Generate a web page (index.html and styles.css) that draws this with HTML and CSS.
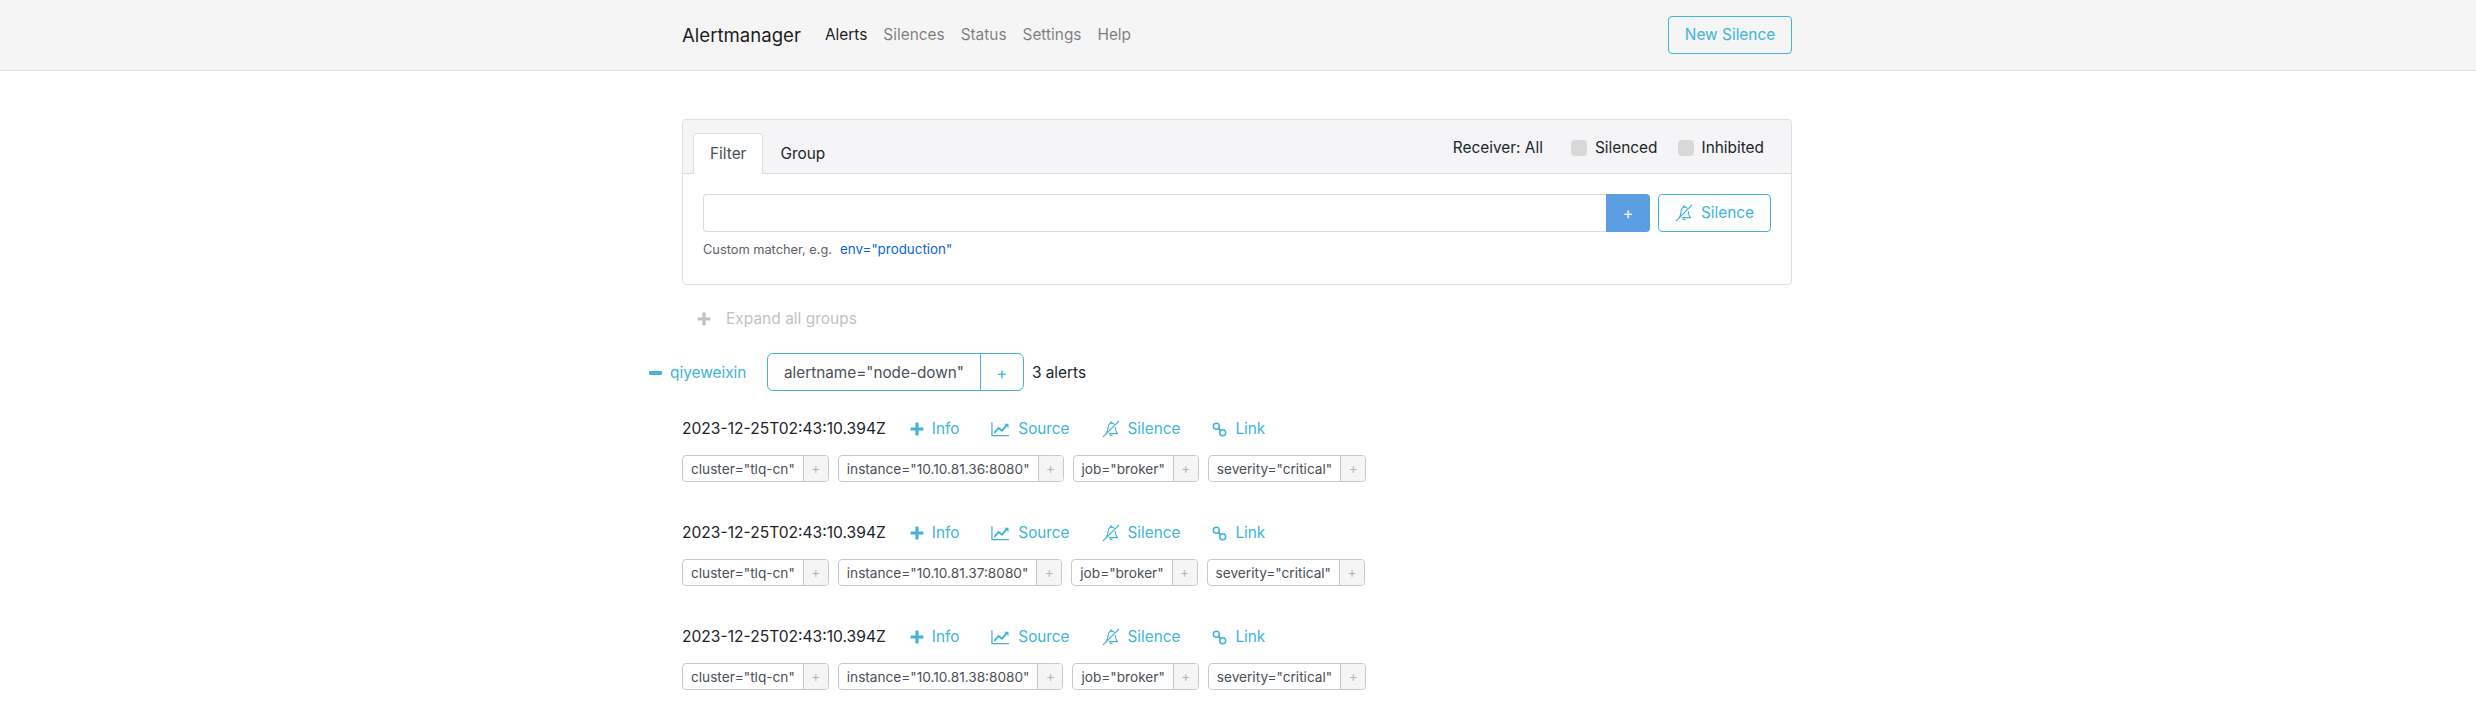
FILE: index.html
```html
<!DOCTYPE html>
<html lang="en">
<head>
<meta charset="utf-8">
<title>Alertmanager</title>
<link rel="stylesheet" href="styles.css">
</head>
<body>
<svg class="defs" width="0" height="0" aria-hidden="true">
  <symbol id="i-plus" viewBox="0 0 14 14"><path d="M5.4 0.6h3.2v4.8h4.8v3.2H8.6v4.8H5.4V8.6H0.6V5.4h4.8z" fill="currentColor"/></symbol>
  <symbol id="i-chart" viewBox="0 0 20 16"><path d="M1 1v14h18" fill="none" stroke="currentColor" stroke-width="1.3"/><path d="M3.5 12l4.5-5 3.5 2.8L17 3.5" fill="none" stroke="currentColor" stroke-width="2"/><path d="M14 2.5h4.4v4.4z" fill="currentColor"/></symbol>
  <symbol id="i-bell" viewBox="0 0 20 20"><path d="M1 19L19 1" fill="none" stroke="currentColor" stroke-width="1.4"/><path d="M4.5 15.5c1.6-1.8 2-3.6 2.1-6.2C6.7 6 8 4 10 3.6c1.5-.3 3 .2 4 1.4M14.8 8c.1 3 .6 5.1 2.2 7.2H7.6" fill="none" stroke="currentColor" stroke-width="1.3"/><path d="M8.2 16.2c.1 2.2 3 2.6 3.8.4z" fill="currentColor"/><circle cx="10" cy="2.4" r="1.1" fill="currentColor"/></symbol>
  <symbol id="i-link" viewBox="0 0 16 16"><circle cx="4.6" cy="4.6" r="3.2" fill="none" stroke="currentColor" stroke-width="1.7"/><circle cx="11.4" cy="11.4" r="3.2" fill="none" stroke="currentColor" stroke-width="1.7"/><path d="M6.6 6.6l2.8 2.8" fill="none" stroke="currentColor" stroke-width="1.7"/></symbol>
</svg>

<nav class="navbar">
  <div class="container nav-row">
    <a class="brand">Alertmanager</a>
    <ul class="nav-links">
      <li class="active">Alerts</li>
      <li>Silences</li>
      <li>Status</li>
      <li>Settings</li>
      <li>Help</li>
    </ul>
    <a class="btn btn-outline new-silence">New Silence</a>
  </div>
</nav>

<main class="container main">
  <section class="card">
    <header class="card-header">
      <ul class="tabs">
        <li class="tab active">Filter</li>
        <li class="tab">Group</li>
      </ul>
      <div class="filters">
        <span class="receiver">Receiver: All</span>
        <label class="check"><span class="box"></span>Silenced</label>
        <label class="check"><span class="box"></span>Inhibited</label>
      </div>
    </header>
    <div class="card-body">
      <div class="search-row">
        <div class="input"></div>
        <button class="add-btn">+</button>
        <a class="btn btn-outline silence-btn"><svg class="ic-bell"><use href="#i-bell"/></svg>Silence</a>
      </div>
      <small class="hint">Custom matcher, e.g.<a class="example">env="production"</a></small>
    </div>
  </section>

  <div class="expand"><svg class="ic-plus"><use href="#i-plus"/></svg>Expand all groups</div>

  <div class="group-head">
    <span class="collapse"><span class="minus"></span>qiyeweixin</span>
    <span class="group-pill"><span class="pill-text">alertname="node-down"</span><span class="pill-add">+</span></span>
    <span class="count">3 alerts</span>
  </div>

  <article class="alert">
    <div class="alert-top">
      <span class="time">2023-12-25T02:43:10.394Z</span>
      <a class="act act-info"><svg class="ic-plus"><use href="#i-plus"/></svg>Info</a>
      <a class="act act-source"><svg class="ic-chart"><use href="#i-chart"/></svg>Source</a>
      <a class="act act-silence"><svg class="ic-bell"><use href="#i-bell"/></svg>Silence</a>
      <a class="act act-link"><svg class="ic-link"><use href="#i-link"/></svg>Link</a>
    </div>
    <div class="labels">
      <span class="label"><span class="label-text">cluster="tlq-cn"</span><span class="label-add">+</span></span>
      <span class="label"><span class="label-text">instance="10.10.81.36:8080"</span><span class="label-add">+</span></span>
      <span class="label"><span class="label-text">job="broker"</span><span class="label-add">+</span></span>
      <span class="label"><span class="label-text">severity="critical"</span><span class="label-add">+</span></span>
    </div>
  </article>

  <article class="alert">
    <div class="alert-top">
      <span class="time">2023-12-25T02:43:10.394Z</span>
      <a class="act act-info"><svg class="ic-plus"><use href="#i-plus"/></svg>Info</a>
      <a class="act act-source"><svg class="ic-chart"><use href="#i-chart"/></svg>Source</a>
      <a class="act act-silence"><svg class="ic-bell"><use href="#i-bell"/></svg>Silence</a>
      <a class="act act-link"><svg class="ic-link"><use href="#i-link"/></svg>Link</a>
    </div>
    <div class="labels">
      <span class="label"><span class="label-text">cluster="tlq-cn"</span><span class="label-add">+</span></span>
      <span class="label"><span class="label-text">instance="10.10.81.37:8080"</span><span class="label-add">+</span></span>
      <span class="label"><span class="label-text">job="broker"</span><span class="label-add">+</span></span>
      <span class="label"><span class="label-text">severity="critical"</span><span class="label-add">+</span></span>
    </div>
  </article>

  <article class="alert">
    <div class="alert-top">
      <span class="time">2023-12-25T02:43:10.394Z</span>
      <a class="act act-info"><svg class="ic-plus"><use href="#i-plus"/></svg>Info</a>
      <a class="act act-source"><svg class="ic-chart"><use href="#i-chart"/></svg>Source</a>
      <a class="act act-silence"><svg class="ic-bell"><use href="#i-bell"/></svg>Silence</a>
      <a class="act act-link"><svg class="ic-link"><use href="#i-link"/></svg>Link</a>
    </div>
    <div class="labels">
      <span class="label"><span class="label-text">cluster="tlq-cn"</span><span class="label-add">+</span></span>
      <span class="label"><span class="label-text">instance="10.10.81.38:8080"</span><span class="label-add">+</span></span>
      <span class="label"><span class="label-text">job="broker"</span><span class="label-add">+</span></span>
      <span class="label"><span class="label-text">severity="critical"</span><span class="label-add">+</span></span>
    </div>
  </article>
</main>
</body>
</html>
```
FILE: styles.css
```css
* { box-sizing: border-box; }
html, body { margin: 0; padding: 0; }
body {
  font-family: Inter, "Liberation Sans", sans-serif;
  font-size: 16px;
  line-height: 24px;
  color: #212529;
  background: #fff;
  height: 718px;
  overflow: hidden;
}
.defs { position: absolute; }
ul { list-style: none; margin: 0; padding: 0; }
.container { width: 1110px; margin-left: 682px; }

.navbar { height: 71px; background: #f5f5f6; border-bottom: 1px solid #dedede; }
.nav-row { height: 70px; display: flex; align-items: center; }
.brand { font-size: 18.6px; color: rgba(0,0,0,.9); margin-right: 24px; }
.nav-links { display: flex; gap: 16px; font-size: 15.4px; color: rgba(0,0,0,.5); }
.nav-links .active { color: rgba(0,0,0,.9); }

.btn { display: inline-flex; align-items: center; justify-content: center; height: 38px; border: 1px solid #41b4d8; border-radius: 4px; color: #41b4d8; font-size: 15.4px; }
.new-silence { width: 124px; margin-left: auto; }

.main { padding-top: 48px; }
.card { height: 166px; border: 1px solid #dfdfdf; border-radius: 4px; }
.card-header { height: 54px; background: #f5f5f7; border-bottom: 1px solid #dcdcdc; display: flex; align-items: flex-end; padding: 0 27px 0 10px; border-radius: 3px 3px 0 0; }
.tabs { display: flex; font-size: 15.4px; margin-bottom: -1px; }
.tab { height: 41px; padding: 8px 16px 0; border: 1px solid transparent; border-radius: 4px 4px 0 0; color: #212529; line-height: 24px; }
.tab.active { background: #fff; border-color: #dedede #dedede #fff; color: #495057; }
.filters { margin-left: auto; align-self: center; display: flex; align-items: center; font-size: 15.4px; padding-top: 3px; }
.receiver { margin-right: 28px; }
.check { display: flex; align-items: center; margin-left: 20px; }
.check:first-of-type { margin-left: 0; }
.box { width: 16px; height: 16px; background: #d8d8d8; border-radius: 4px; margin-right: 8px; }

.card-body { padding: 20px 20px 0; }
.search-row { display: flex; height: 38px; }
.input { flex: 1; border: 1px solid #dcdcdc; border-right: 0; border-radius: 4px 0 0 4px; }
.add-btn { width: 44px; border: 0; padding: 0; background: #5c9ee2; color: #fff; font: 16px Inter, sans-serif; border-radius: 0 4px 4px 0; }
.silence-btn { width: 113px; margin-left: 8px; gap: 8px; }
.hint { display: block; margin-top: 7px; font-size: 12.8px; line-height: 20px; color: #5c6268; }
.example { color: #0a66d8; margin-left: 8px; font-size: 13.4px; }

.ic-bell { width: 18px; height: 18px; }
.ic-plus { width: 14px; height: 14px; }
.ic-chart { width: 19px; height: 16px; }
.ic-link { width: 15px; height: 15px; }

.expand { display: flex; align-items: center; margin: 22px 0 0 15px; height: 24px; color: #c2c2c2; font-size: 15.5px; gap: 15px; }

.group-head { display: flex; align-items: center; height: 38px; margin: 22px 0 0 -33px; }
.collapse { display: flex; align-items: center; color: #41b4d8; font-size: 15.4px; width: 118px; padding-top: 1px; }
.minus { width: 13px; height: 4px; background: #41b4d8; margin-right: 8px; border-radius: 1px; }
.group-pill { display: flex; height: 38px; border: 1px solid #41b4d8; border-radius: 6px; }
.pill-text { padding: 0 16px; line-height: 37px; font-size: 15.3px; color: #495057; border-right: 1px solid #41b4d8; }
.pill-add { width: 42px; text-align: center; color: #41b4d8; line-height: 38px; }
.count { margin-left: 8px; font-size: 15.4px; padding-top: 1px; }

.alert { height: 104px; padding-top: 26px; }
.alert-top { display: flex; align-items: center; height: 24px; }
.time { font-size: 15.6px; margin-right: 24px; }
.act { display: flex; align-items: center; color: #41b4d8; font-size: 15.3px; gap: 8px; margin-right: 32px; }
.labels { display: flex; gap: 9px; margin-top: 14px; }
.label { display: flex; height: 27px; border: 1px solid #c9c9c9; border-radius: 4px; font-size: 13.65px; color: #495057; }
.label-text { padding: 0 8px; line-height: 26px; }
.label-add { width: 25px; text-align: center; line-height: 25px; color: #b5b5b5; background: #f5f5f5; border-left: 1px solid #c9c9c9; border-radius: 0 3px 3px 0; }
```
